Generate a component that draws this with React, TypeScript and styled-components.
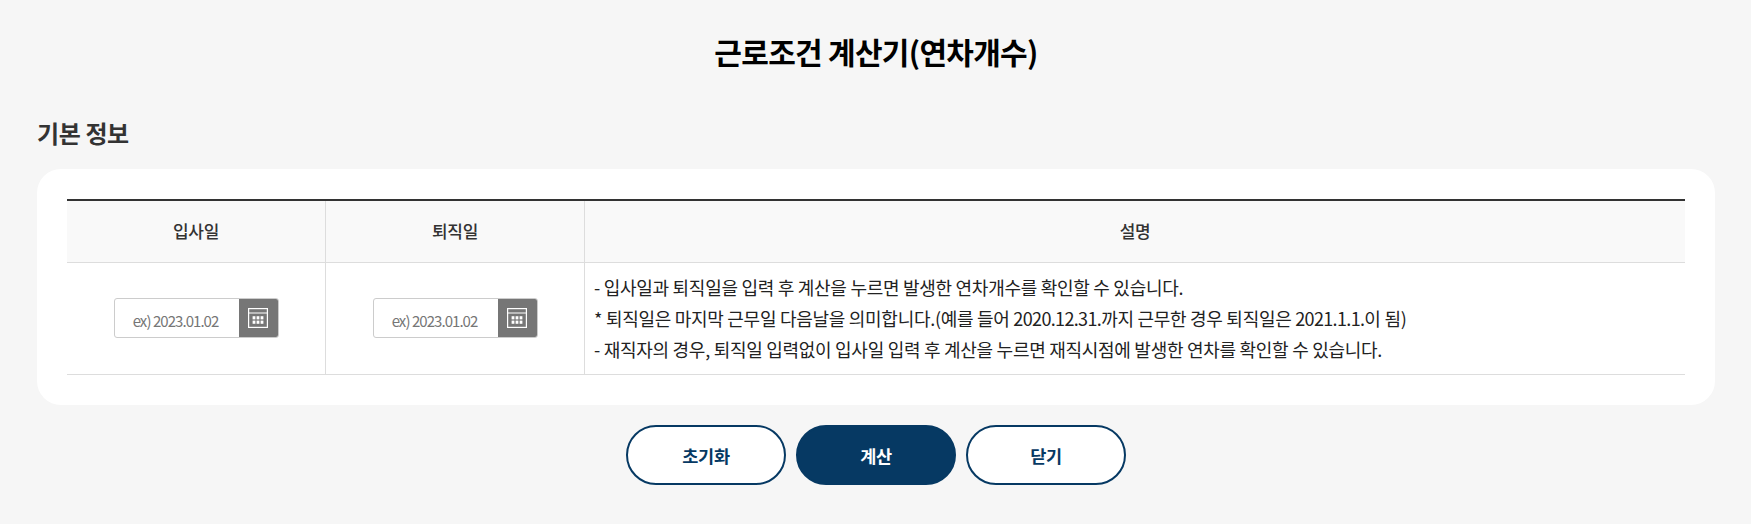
import React from "react";
import styled, { createGlobalStyle } from "styled-components";

const Global = createGlobalStyle`
  html, body { margin: 0; padding: 0; background: #f6f6f6; }
  body { font-family: "Noto Sans CJK KR", "Noto Sans", sans-serif; color: #333; }
  * { box-sizing: border-box; }
`;

const Page = styled.main`
  width: 1751px;
  height: 524px;
  padding: 26px 36px 0 37px;
  overflow: hidden;
`;

const Title = styled.h1`
  margin: 0;
  height: 52px;
  line-height: 50px;
  font-size: 30px;
  font-weight: 700;
  letter-spacing: -0.7px;
  color: #000;
  text-align: center;
`;

const Section = styled.h2`
  margin: 36px 0 0;
  height: 36px;
  line-height: 38px;
  font-size: 24px;
  font-weight: 700;
  letter-spacing: -0.4px;
  color: #333;
`;

const Card = styled.section`
  margin-top: 19px;
  height: 236px;
  padding: 30px;
  background: #fff;
  border-radius: 24px;
`;

const Table = styled.div`
  display: grid;
  grid-template-columns: 258px 259px 1fr;
  grid-template-rows: 62px 111px;
  border-top: 2px solid #333;
  border-bottom: 1px solid #ddd;
`;

const HeadCell = styled.div`
  display: flex;
  align-items: center;
  justify-content: center;
  padding-bottom: 2px;
  background: #f9f9f9;
  border-bottom: 1px solid #ddd;
  font-size: 17px;
  font-weight: 500;
  letter-spacing: -0.3px;
  color: #333;
  & + & { border-left: 1px solid #ddd; }
`;

const BodyCell = styled.div<{ $first?: boolean }>`
  display: flex;
  align-items: center;
  justify-content: center;
  padding-bottom: 1px;
  border-left: ${(p) => (p.$first ? "none" : "1px solid #ddd")};
`;

const DateField = styled.div`
  display: flex;
  width: 165px;
  height: 40px;
  border: 1px solid #ccc;
  border-radius: 3px;
  overflow: hidden;
  background: #fff;
`;

const DateInput = styled.input`
  flex: 1;
  min-width: 0;
  border: 0;
  outline: 0;
  padding: 4px 2px 0 0;
  text-align: center;
  font-family: inherit;
  font-size: 15px;
  letter-spacing: -0.95px;
  background: transparent;
  &::placeholder { color: #767676; opacity: 1; }
`;

const CalButton = styled.button`
  width: 39px;
  border: 0;
  padding: 0;
  background: #767676;
  display: flex;
  align-items: center;
  justify-content: center;
`;

const Notes = styled(BodyCell)`
  flex-direction: column;
  align-items: flex-start;
  padding-left: 9px;
`;

const Note = styled.p`
  margin: 0;
  font-size: 18px;
  line-height: 31px;
  letter-spacing: -0.28px;
  color: #222;
  white-space: nowrap;
`;

const Digits = styled.span`
  letter-spacing: -0.65px;
`;

const Actions = styled.div`
  display: flex;
  justify-content: center;
  gap: 10px;
  margin-top: 20px;
`;

const ActionButton = styled.button<{ $primary?: boolean }>`
  width: 160px;
  height: 60px;
  border-radius: 30px;
  border: 2px solid #063963;
  background: ${(p) => (p.$primary ? "#063963" : "#fff")};
  color: ${(p) => (p.$primary ? "#fff" : "#063963")};
  font-family: inherit;
  font-size: 17.5px;
  font-weight: 700;
  letter-spacing: -0.3px;
`;

const CalendarIcon = () => (
  <svg width="20" height="20" viewBox="0 0 20 20" fill="none" aria-hidden="true">
    <rect x="0.6" y="0.6" width="18.8" height="18.8" stroke="#fff" strokeWidth="1.2" />
    <path d="M0.6 5h18.8" stroke="#fff" strokeWidth="1.2" />
    <g fill="#fff">
      {[4.6, 8.6, 12.6].map((x) =>
        [8.2, 12.6].map((y) => <rect key={`${x}-${y}`} x={x} y={y} width="2.8" height="3.2" />)
      )}
    </g>
  </svg>
);

const DateBox = () => (
  <DateField>
    <DateInput placeholder="ex) 2023.01.02" />
    <CalButton type="button"><CalendarIcon /></CalButton>
  </DateField>
);

export default function App() {
  return (
    <Page>
      <Global />
      <Title>근로조건 계산기(연차개수)</Title>
      <Section>기본 정보</Section>
      <Card>
        <Table>
          <HeadCell>입사일</HeadCell>
          <HeadCell>퇴직일</HeadCell>
          <HeadCell>설명</HeadCell>
          <BodyCell $first><DateBox /></BodyCell>
          <BodyCell><DateBox /></BodyCell>
          <Notes>
            <Note>- 입사일과 퇴직일을 입력 후 계산을 누르면 발생한 연차개수를 확인할 수 있습니다.</Note>
            <Note>* 퇴직일은 마지막 근무일 다음날을 의미합니다.(예를 들어 <Digits>2020.12.31.</Digits>까지 근무한 경우 퇴직일은 <Digits>2021.1.1.</Digits>이 됨)</Note>
            <Note>- 재직자의 경우, 퇴직일 입력없이 입사일 입력 후 계산을 누르면 재직시점에 발생한 연차를 확인할 수 있습니다.</Note>
          </Notes>
        </Table>
      </Card>
      <Actions>
        <ActionButton type="button">초기화</ActionButton>
        <ActionButton type="button" $primary>계산</ActionButton>
        <ActionButton type="button">닫기</ActionButton>
      </Actions>
    </Page>
  );
}
